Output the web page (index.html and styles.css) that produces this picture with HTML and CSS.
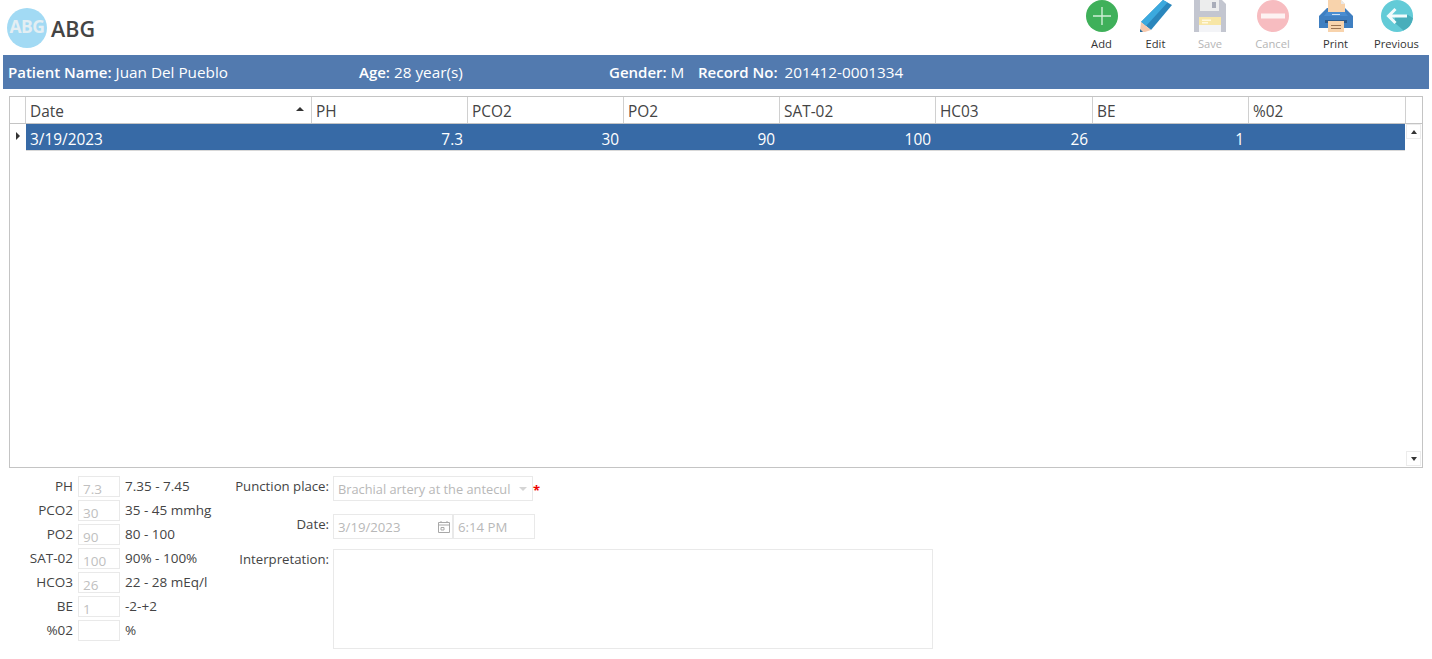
FILE: index.html
```html
<!DOCTYPE html>
<html lang="en">
<head>
<meta charset="utf-8">
<title>ABG</title>
<link rel="stylesheet" href="styles.css">
</head>
<body>
<header class="topbar">
  <div class="brand">
    <div class="logo">ABG</div>
    <h1 class="title">ABG</h1>
  </div>
  <nav class="tools">
    <div class="tool t-add">
      <svg class="icon" viewBox="0 0 32 32"><circle cx="16" cy="16" r="16" fill="#3fb05a"/><path d="M16 7v18M7 16h18" stroke="#cfeed6" stroke-width="1.4"/></svg>
      <span>Add</span>
    </div>
    <div class="tool t-edit">
      <svg class="icon" viewBox="0 0 34 32"><path d="M24 0l9 5-21 25-10-8z" fill="#2a86bc"/><path d="M24 0l4.500 2.500L7 26l-5-4z" fill="#3ba9de"/><path d="M2 22l10 8-6 2H1z" fill="#f5c9ae"/><path d="M1 29l3 3H1z" fill="#2a6f9e"/></svg>
      <span>Edit</span>
    </div>
    <div class="tool t-save off">
      <svg class="icon" viewBox="0 0 32 32"><path d="M0 0h28l4 4v28H0z" fill="#c3c6d0"/><path d="M6 0h19v11H6z" fill="#eceded"/><path d="M18 2h4v6h-4z" fill="#a9adb9"/><path d="M5 17h22v8H5z" fill="#f7e6a6"/><path d="M5 25h22v7H5z" fill="#f3f4f7"/><path d="M8 19.500h9v1.500H8zM8 22h6v1.500H8z" fill="#fff8e0"/></svg>
      <span>Save</span>
    </div>
    <div class="tool t-cancel off">
      <svg class="icon" viewBox="0 0 32 32"><circle cx="16" cy="16" r="16" fill="#f7bcc0"/><path d="M4 13.500h24v5H4z" fill="#fdf2f2"/></svg>
      <span>Cancel</span>
    </div>
    <div class="tool t-print">
      <svg class="icon" viewBox="0 0 34 32"><path d="M8 8h18l8 8v12H0V16z" fill="#3f7fc1"/><path d="M9 0h13l4 4v8H9z" fill="#f8d3ac"/><path d="M22 0l4 4h-4z" fill="#e8e8e8"/><path d="M8 12h18l3 4H5z" fill="#4a8dd1"/><path d="M13 14h8v1h-8z" fill="#cfe0f2"/><path d="M6 20h22v3H6z" fill="#2c5a8c"/><path d="M9 21h16v11H9z" fill="#f8d3ac"/><path d="M12 25h10v1H12zM12 28h10v1H12z" fill="#9b7350"/></svg>
      <span>Print</span>
    </div>
    <div class="tool t-prev">
      <svg class="icon" viewBox="0 0 32 32"><circle cx="16" cy="16" r="16" fill="#63cbd7"/><path d="M14 23l8.500 7.500A16 16 0 0 0 32 18l-5-3H14z" fill="#49aebb"/><path d="M14.500 9l-7 7 7 7M8 16h18" fill="none" stroke="#f2fbfc" stroke-width="3"/></svg>
      <span>Previous</span>
    </div>
  </nav>
</header>

<section class="patient">
  <div class="pf pf-name"><b>Patient Name:</b> Juan Del Pueblo</div>
  <div class="pf pf-age"><b>Age:</b> 28 year(s)</div>
  <div class="pf pf-gender"><b>Gender:</b> M</div>
  <div class="pf pf-record"><b>Record No:</b> <span class="rec">201412-0001334</span></div>
</section>

<section class="grid">
  <div class="row head">
    <div class="ind"></div>
    <div class="cell date">Date<i class="sort"></i></div>
    <div class="cell">PH</div>
    <div class="cell">PCO2</div>
    <div class="cell">PO2</div>
    <div class="cell">SAT-02</div>
    <div class="cell">HC03</div>
    <div class="cell">BE</div>
    <div class="cell">%02</div>
    <div class="corner"></div>
  </div>
  <div class="gridbody">
    <div class="rows">
      <div class="row data">
        <div class="ind"><i class="arrow"></i></div>
        <div class="cell date sel">3/19/2023</div>
        <div class="cell num sel">7.3</div>
        <div class="cell num sel">30</div>
        <div class="cell num sel">90</div>
        <div class="cell num sel">100</div>
        <div class="cell num sel">26</div>
        <div class="cell num sel">1</div>
        <div class="cell num sel"></div>
      </div>
    </div>
    <div class="scroll">
      <div class="sbtn"><i class="up"></i></div>
      <div class="sbtn"><i class="down"></i></div>
    </div>
  </div>
</section>

<section class="form">
  <div class="labs">
    <div class="lab"><label>PH</label><div class="box">7.3</div><span>7.35 - 7.45</span></div>
    <div class="lab"><label>PCO2</label><div class="box">30</div><span>35 - 45 mmhg</span></div>
    <div class="lab"><label>PO2</label><div class="box">90</div><span>80 - 100</span></div>
    <div class="lab"><label>SAT-02</label><div class="box">100</div><span>90% - 100%</span></div>
    <div class="lab"><label>HCO3</label><div class="box">26</div><span>22 - 28 mEq/l</span></div>
    <div class="lab"><label>BE</label><div class="box">1</div><span>-2-+2</span></div>
    <div class="lab"><label>%02</label><div class="box"></div><span>%</span></div>
  </div>
  <div class="details">
    <div class="d-row d-place">
      <label>Punction place:</label>
      <div class="field combo"><span class="clip">Brachial artery at the antecul</span><i class="caret"></i></div>
      <b class="req">*</b>
    </div>
    <div class="d-row d-date">
      <label>Date:</label>
      <div class="field datebox">3/19/2023
        <svg class="cal" viewBox="0 0 12 12"><path d="M.5 1.500h11v10H.5zM.5 4h11M3 0v2M9 0v2M3 6.500h3v2.500H3z" fill="none" stroke="#a8a8a8"/></svg>
      </div>
      <div class="field timebox">6:14 PM</div>
    </div>
    <div class="d-row d-int">
      <label>Interpretation:</label>
      <div class="field area"></div>
    </div>
  </div>
</section>
</body>
</html>
```
FILE: styles.css
```css
* { box-sizing: border-box; }
html, body { margin: 0; padding: 0; }
body { width: 1432px; height: 659px; overflow: hidden; background: #fff; font-family: "Open Sans", "Noto Sans", sans-serif; font-size: 13px; color: #444; }

.topbar { height: 55px; display: flex; justify-content: space-between; }
.brand { display: flex; align-items: center; padding: 5px 0 0 7px; height: 51px; }
.logo { width: 40px; height: 40px; border-radius: 50%; background: #a2daf4; color: #e3eef3; font-weight: 700; font-size: 17.500px; line-height: 37px; text-align: center; letter-spacing: -.5px; }
.title { margin: 0 0 0 4px; font-size: 21.500px; font-weight: 600; color: #444; }

.tools { display: flex; padding-right: 2.500px; }
.tool { display: flex; flex-direction: column; align-items: center; font-size: 11.200px; color: #333; line-height: 15px; }
.tool .icon { width: 32px; height: 32px; display: block; margin-bottom: 4px; overflow: hidden; flex: none; }
.tool.off { color: #b5b5b5; }
.t-add { width: 54px; }
.t-edit { width: 54px; }
.t-save { width: 55px; }
.t-cancel { width: 70px; }
.t-print { width: 56px; }
.t-prev { width: 66px; }
.t-edit .icon, .t-print .icon { width: 34px; }

.patient { margin: 0 3px; height: 34px; background: #527aaf; color: #fff; display: flex; align-items: center; font-size: 15.300px; line-height: 36px; }
.patient b { font-weight: 600; font-size: 15px; }
.pf { white-space: nowrap; }
.pf-name { width: 356px; padding-left: 5px; }
.pf-age { width: 250px; }
.pf-gender { width: 89px; }
.rec { margin-left: 3px; }

.grid { margin: 7px 9px 0; width: 1414px; height: 372px; border: 1px solid #c4c4c4; display: flex; flex-direction: column; font-size: 15.400px; color: #444; }
.row { display: grid; grid-template-columns: 16px 286px 156px 156px 156px 156px 157px 156px 157px 1fr; }
.head { height: 27px; border-bottom: 1px solid #c4c4c4; }
.head .ind, .head .cell { border-right: 1px solid #d0d0d0; }
.cell { padding: 0 4px; line-height: 29px; white-space: nowrap; position: relative; height: 26px; }
.sort { position: absolute; right: 7px; top: 10px; border: 4px solid transparent; border-top: 0; border-bottom: 4px solid #333; }

.gridbody { flex: 1; display: flex; }
.rows { flex: 1; }
.data { height: 27px; grid-template-columns: 16px 286px 156px 156px 156px 156px 157px 156px 156px; }
.data .ind { display: flex; align-items: center; padding-left: 6px; background: #fff; }
.arrow { border: 4px solid transparent; border-right: 0; border-left: 4px solid #333; margin-top: -3px; }
.sel { background: #376aa6; color: #fff; height: 27px; line-height: 31px; border-bottom: 1px solid #d8d8d8; overflow: hidden; }
.num { text-align: right; padding-right: 5px; }

.scroll { width: 17px; display: flex; flex-direction: column; justify-content: space-between; padding: 0 1px 1px 1px; }
.sbtn { width: 15px; height: 15px; border: 1px solid #ececec; display: flex; align-items: center; justify-content: center; }
.up { border: 3.500px solid transparent; border-top: 0; border-bottom: 4px solid #333; }
.down { border: 3.500px solid transparent; border-bottom: 0; border-top: 4px solid #333; }

.form { display: flex; height: 184px; font-size: 13.500px; }
.labs { width: 221px; padding: 8px 0 0 0; }
.lab { height: 24px; display: flex; line-height: 21px; white-space: nowrap; }
.lab label { width: 73px; text-align: right; }
.box { width: 42px; height: 21px; margin-left: 5px; border: 1px solid #e9e9e9; color: #c0c0c0; padding-left: 4px; line-height: 24px; }
.lab span { margin-left: 5px; }

.details { padding-top: 8px; flex: 1; font-size: 13.200px; }
.d-row { display: flex; }
.d-row label { width: 108px; text-align: right; line-height: 21px; white-space: nowrap; flex: none; }
.field { border: 1px solid #e9e9e9; color: #b8b8b8; margin-left: 4px; line-height: 25px; padding-left: 4px; white-space: nowrap; }
.d-place { height: 38px; }
.combo { width: 200px; height: 25px; display: flex; align-items: center; justify-content: space-between; padding: 1px 5px 0 4px; }
.clip { flex: none; font-size: 12.800px; }
.caret { border: 4px solid transparent; border-bottom: 0; border-top: 4px solid #d5d5d5; }
.req { color: #e00; font-size: 13px; margin-left: 0; line-height: 28px; }
.d-date { height: 35px; }
.d-date label { line-height: 21px; }
.datebox { width: 120px; height: 25px; position: relative; }
.cal { position: absolute; right: 2px; top: 6px; width: 12px; height: 12px; }
.timebox { width: 82px; height: 25px; margin-left: 0; }
.area { width: 600px; height: 100px; }
```
